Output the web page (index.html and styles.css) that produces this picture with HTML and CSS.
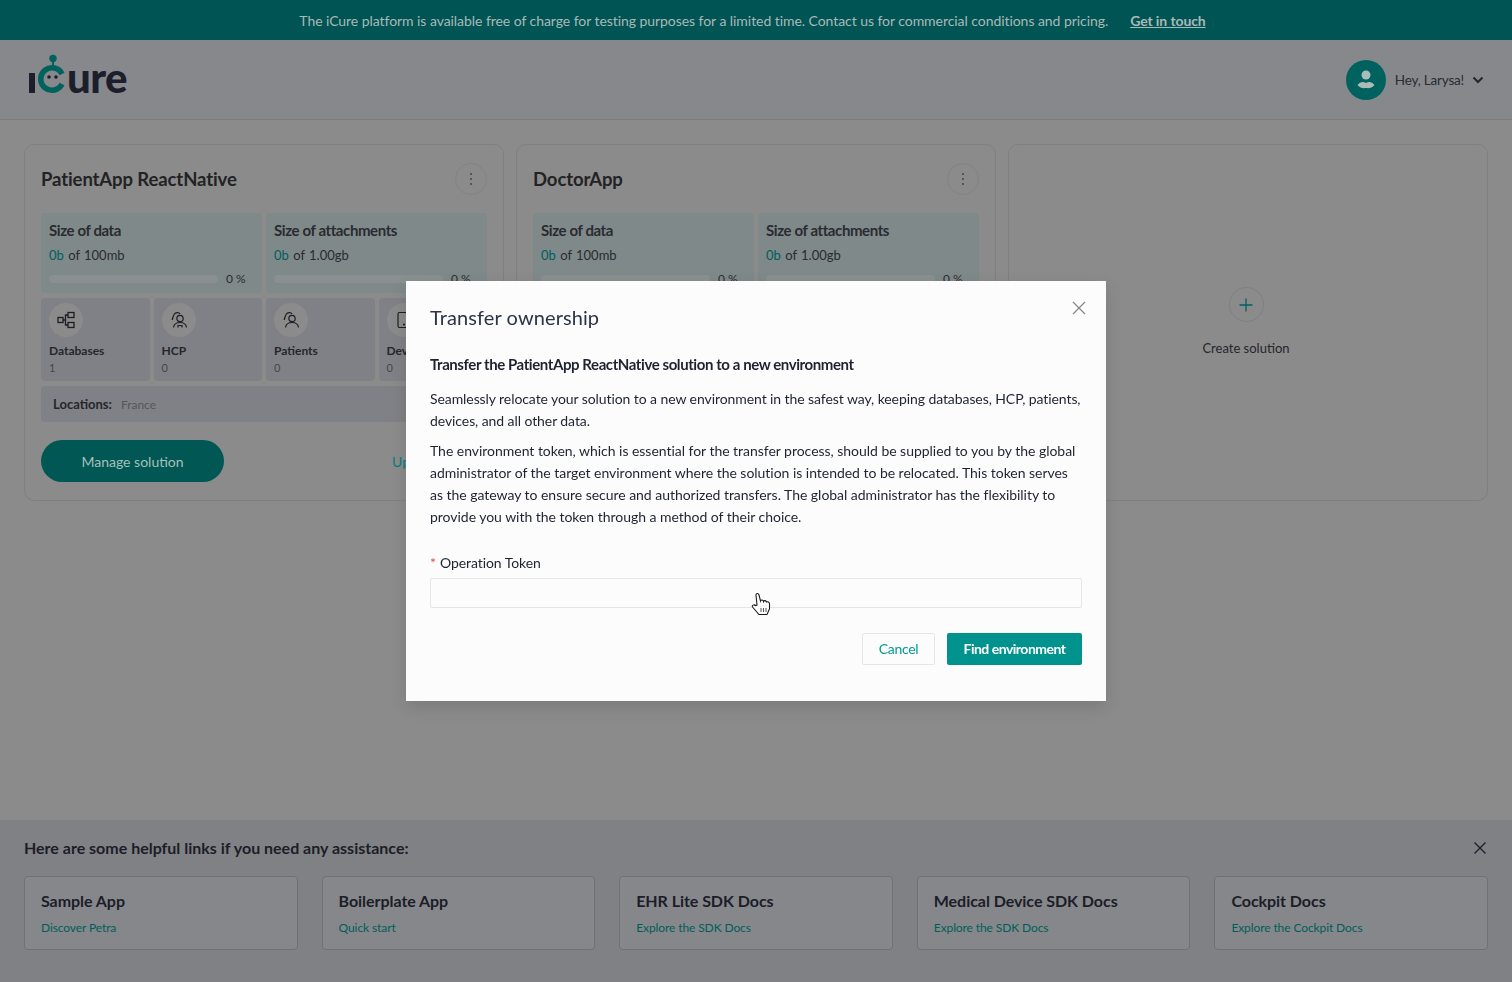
FILE: index.html
```html
<!DOCTYPE html>
<html lang="en">
<head>
    <meta charset="UTF-8">
    <meta name="viewport" content="width=device-width, initial-scale=1.0">
    <title>iCure Cockpit</title>
    <link rel="stylesheet" href="styles.css">
</head>
<body>
    <div class="banner">
        <span>The iCure platform is available free of charge for testing purposes for a limited time. Contact us for commercial conditions and pricing.</span>
        <a href="#" class="banner-link">Get in touch</a>
    </div>

    <header class="topbar">
        <div class="logo">
            <svg class="logo-mark" width="39" height="40" viewBox="0 0 39 40">
                <rect x="1" y="19" width="6" height="20" fill="#1d1e2b"/>
                <circle cx="25" cy="4.500" r="3.700" fill="#00625d"/>
                <rect x="24" y="7" width="2" height="5" fill="#00625d"/>
                <path d="M34 20 A11.200 11.200 0 1 0 34 30" fill="none" stroke="#00625d" stroke-width="5.600"/>
                <circle cx="21" cy="23" r="1.800" fill="#1d1e2b"/>
                <circle cx="28" cy="23" r="1.800" fill="#1d1e2b"/>
            </svg>
            <span class="logo-text">ure</span>
        </div>
        <div class="user">
            <span class="avatar">
                <svg width="40" height="40" viewBox="0 0 40 40">
                    <circle cx="20" cy="15" r="4.500" fill="#a9bcb9"/>
                    <path d="M11.500 25 C14 22 17 21 20 23 C23 21 26 22 28.500 25 C26 28 23 28.500 20 28 C17 28.500 14 28 11.500 25 Z" fill="#a9bcb9"/>
                </svg>
            </span>
            <span class="user-name">Hey, Larysa!</span>
            <svg width="12" height="8" viewBox="0 0 12 8"><path d="M1.500 1.500 L6 6 L10.500 1.500" fill="none" stroke="#25262c" stroke-width="2"/></svg>
        </div>
    </header>

    <main class="solutions">
        <section class="card">
            <div class="card-head">
                <h2>PatientApp ReactNative</h2>
                <button class="kebab"><i></i><i></i><i></i></button>
            </div>
            <div class="stats">
                <div class="stat">
                    <h3>Size of data</h3>
                    <p class="usage"><b>0b</b> of 100mb</p>
                    <div class="progress"><div class="track"></div><span>0 %</span></div>
                </div>
                <div class="stat">
                    <h3>Size of attachments</h3>
                    <p class="usage"><b>0b</b> of 1.00gb</p>
                    <div class="progress"><div class="track"></div><span>0 %</span></div>
                </div>
            </div>
            <div class="tiles">
                <div class="tile">
                    <span class="tile-icon">
                        <svg width="18" height="18" viewBox="0 0 18 18" fill="none" stroke="#1d1e24" stroke-width="1.300">
                            <rect x="1" y="6.500" width="5" height="5"/>
                            <rect x="11" y="1.500" width="6" height="5"/>
                            <rect x="11" y="11.500" width="6" height="5"/>
                            <path d="M6 9 H8.500 V4 H11 M8.500 9 V14 H11"/>
                        </svg>
                    </span>
                    <h4>Databases</h4>
                    <p>1</p>
                </div>
                <div class="tile">
                    <span class="tile-icon">
                        <svg width="18" height="18" viewBox="0 0 18 18" fill="none" stroke="#1d1e24" stroke-width="1.200">
                            <path d="M2 9 C3 7 3 5 4 3.500 C5.500 1 9 1 10 3"/>
                            <circle cx="10" cy="7.500" r="3.200"/>
                            <path d="M3.500 16.500 C4 13 6.500 11.500 10 11.500 C13.500 11.500 16 13 16.500 16.500"/>
                            <path d="M8 16.500 V14.500 H12 V16.500"/>
                        </svg>
                    </span>
                    <h4>HCP</h4>
                    <p>0</p>
                </div>
                <div class="tile">
                    <span class="tile-icon">
                        <svg width="18" height="18" viewBox="0 0 18 18" fill="none" stroke="#1d1e24" stroke-width="1.200">
                            <path d="M2 9 C3 7 3 5 4 3.500 C5.500 1 9 1 10 3"/>
                            <circle cx="10" cy="7.500" r="3.200"/>
                            <path d="M3.500 16.500 C4 13 6.500 11.500 10 11.500 C13.500 11.500 16 13 16.500 16.500"/>
                        </svg>
                    </span>
                    <h4>Patients</h4>
                    <p>0</p>
                </div>
                <div class="tile">
                    <span class="tile-icon">
                        <svg width="18" height="18" viewBox="0 0 18 18" fill="none" stroke="#1d1e24" stroke-width="1.200">
                            <rect x="3" y="1.500" width="12" height="15" rx="1.500"/>
                            <circle cx="9" cy="13.500" r=".5"/>
                        </svg>
                    </span>
                    <h4>Devices</h4>
                    <p>0</p>
                </div>
            </div>
            <div class="locations"><b>Locations:</b> <span>France</span></div>
            <div class="card-foot">
                <button class="manage">Manage solution</button>
                <a href="#" class="upgrade">Upgrade plan</a>
            </div>
        </section>

        <section class="card">
            <div class="card-head">
                <h2>DoctorApp</h2>
                <button class="kebab"><i></i><i></i><i></i></button>
            </div>
            <div class="stats">
                <div class="stat">
                    <h3>Size of data</h3>
                    <p class="usage"><b>0b</b> of 100mb</p>
                    <div class="progress"><div class="track"></div><span>0 %</span></div>
                </div>
                <div class="stat">
                    <h3>Size of attachments</h3>
                    <p class="usage"><b>0b</b> of 1.00gb</p>
                    <div class="progress"><div class="track"></div><span>0 %</span></div>
                </div>
            </div>
        </section>

        <section class="card card-create">
            <span class="plus">
                <svg width="16" height="16" viewBox="0 0 16 16"><path d="M8 1.500 V14.500 M1.500 8 H14.500" stroke="#00625d" stroke-width="1.300"/></svg>
            </span>
            <p>Create solution</p>
        </section>
    </main>

    <footer class="help">
        <div class="help-head">
            <h3>Here are some helpful links if you need any assistance:</h3>
            <svg width="14" height="14" viewBox="0 0 14 14"><path d="M1.500 1.500 L12.500 12.500 M12.500 1.500 L1.500 12.500" stroke="#1d1e2b" stroke-width="1.400"/></svg>
        </div>
        <div class="help-links">
            <a href="#" class="help-card"><strong>Sample App</strong><span>Discover Petra</span></a>
            <a href="#" class="help-card"><strong>Boilerplate App</strong><span>Quick start</span></a>
            <a href="#" class="help-card"><strong>EHR Lite SDK Docs</strong><span>Explore the SDK Docs</span></a>
            <a href="#" class="help-card"><strong>Medical Device SDK Docs</strong><span>Explore the SDK Docs</span></a>
            <a href="#" class="help-card"><strong>Cockpit Docs</strong><span>Explore the Cockpit Docs</span></a>
        </div>
    </footer>

    <div class="modal-wrap">
        <div class="modal">
            <svg class="modal-close" width="14" height="14" viewBox="0 0 14 14"><path d="M1 1 L13 13 M13 1 L1 13" stroke="#85868a" stroke-width="1.200"/></svg>
            <h2>Transfer ownership</h2>
            <h3>Transfer the PatientApp ReactNative solution to a new environment</h3>
            <p class="lead">Seamlessly relocate your solution to a new environment in the safest way, keeping databases, HCP, patients, devices, and all other data.</p>
            <p>The environment token, which is essential for the transfer process, should be supplied to you by the global administrator of the target environment where the solution is intended to be relocated. This token serves as the gateway to ensure secure and authorized transfers. The global administrator has the flexibility to provide you with the token through a method of their choice.</p>
            <label for="token"><em>*</em>Operation Token</label>
            <input type="text" id="token">
            <div class="modal-actions">
                <button class="btn-cancel">Cancel</button>
                <button class="btn-find">Find environment</button>
            </div>
        </div>
    </div>

    <!-- mouse pointer caught in the screenshot -->
    <svg class="cursor" width="20" height="24" viewBox="0 0 20 24">
        <path d="M6 13 L5 3 C5 1 7.500 1 8 3 L9.500 9 C10 7.500 12 7.500 12.500 9.500 C13 8 15 8.500 15.500 10 C16.500 9.500 18.500 10 18.500 12 L18.500 17 L16 22.500 L8 22.500 L1.500 15 C.5 13.500 3 12 4.500 13.500 Z" fill="#fff" stroke="#1b1b1b" stroke-width="1.100"/>
        <path d="M10 16 V20 M12.500 16 V20 M15 16 V20" stroke="#555" stroke-width="1"/>
    </svg>
</body>
</html>
```

FILE: styles.css
```css
/* General Styling */
* {
    box-sizing: border-box;
}

html, body {
    height: 100%;
}

body {
    font-family: 'Lato', sans-serif;
    margin: 0;
    padding: 0;
    background-color: #8b8b8b;
    color: #25262c;
    display: flex;
    flex-direction: column;
    overflow: hidden;
}

h2, h3, h4, p {
    margin: 0;
}

a {
    text-decoration: none;
}

button {
    font-family: inherit;
    cursor: pointer;
}

/* Banner */
.banner {
    height: 40px;
    background-color: #005453;
    color: #a9b9b8;
    font-size: 14px;
    letter-spacing: -0.057px;
    padding-right: 7px;
    display: flex;
    align-items: center;
    justify-content: center;
    gap: 22px;
    flex-shrink: 0;
}

.banner-link {
    color: #a9b9b8;
    font-weight: 700;
    letter-spacing: -0.1px;
    text-decoration: underline;
}

/* Header */
.topbar {
    height: 80px;
    background-color: #86888c;
    border-bottom: 1px solid #7b7c7f;
    padding: 0 28px;
    display: flex;
    align-items: center;
    justify-content: space-between;
    flex-shrink: 0;
}

.logo {
    display: flex;
    align-items: flex-end;
    height: 40px;
    margin-bottom: 12px;
}

.logo-mark {
    display: block;
}

.logo-text {
    font-size: 42px;
    font-weight: 900;
    line-height: 34px;
    color: #1d1e2b;
    letter-spacing: -0.5px;
}

.user {
    display: flex;
    align-items: center;
}

.avatar {
    width: 40px;
    height: 40px;
    border-radius: 50%;
    background-color: #00625e;
    display: block;
}

.avatar svg {
    display: block;
}

.user-name {
    font-size: 13.5px;
    letter-spacing: -0.2px;
    margin: 0 8px 0 9px;
    color: #2a2b33;
}

/* Solution cards */
.solutions {
    padding: 24px;
    display: grid;
    grid-template-columns: repeat(3, 1fr);
    gap: 12px;
    flex-shrink: 0;
}

.card {
    height: 357px;
    border: 1px solid #7e8083;
    border-radius: 10px;
    padding: 18px 16px 16px;
    overflow: hidden;
}

.card-head {
    display: flex;
    align-items: center;
    justify-content: space-between;
    height: 32px;
    margin-bottom: 18px;
}

.card-head h2 {
    font-size: 18.5px;
    font-weight: 700;
    letter-spacing: -0.1px;
    color: #232325;
}

.kebab {
    width: 32px;
    height: 32px;
    border: 1px solid #838383;
    border-radius: 50%;
    background: none;
    padding: 0;
    display: flex;
    flex-direction: column;
    align-items: center;
    justify-content: center;
    gap: 3px;
}

.kebab i {
    width: 2px;
    height: 2px;
    background-color: #55565a;
    display: block;
}

.stats {
    display: grid;
    grid-template-columns: 1fr 1fr;
    gap: 4px;
}

.stat {
    height: 80px;
    background-color: #7f898a;
    border-radius: 4px;
    padding: 8px 8px 0;
}

.stat h3 {
    font-size: 15px;
    font-weight: 700;
    letter-spacing: -0.4px;
    color: #2a2b30;
    line-height: 18px;
}

.usage {
    font-size: 13px;
    margin-top: 7px;
    line-height: 18px;
    color: #2a2b30;
    word-spacing: 1px;
}

.usage b {
    font-weight: 400;
    color: #005e5a;
}

.progress {
    display: flex;
    align-items: center;
    gap: 8px;
    margin-top: 7px;
    font-size: 12px;
    color: #2a2b30;
}

.track {
    flex: 1;
    height: 8px;
    border-radius: 4px;
    background-color: #8a8f90;
}

.progress span {
    width: 28px;
    white-space: nowrap;
}

.tiles {
    display: grid;
    grid-template-columns: repeat(4, 1fr);
    gap: 4px;
    margin-top: 5px;
}

.tile {
    height: 83px;
    background-color: #808186;
    border-radius: 4px;
    padding: 5px 8px;
}

.tile-icon {
    width: 34px;
    height: 34px;
    border-radius: 50%;
    background-color: #8b8b8b;
    display: flex;
    align-items: center;
    justify-content: center;
}

.tile h4 {
    font-size: 12px;
    font-weight: 700;
    line-height: 16px;
    margin-top: 6px;
    color: #25262c;
}

.tile p {
    font-size: 11px;
    line-height: 14px;
    margin-top: 2px;
    color: #45464c;
}

.locations {
    height: 36px;
    background-color: #808186;
    border-radius: 4px;
    margin-top: 5px;
    padding: 0 12px;
    display: flex;
    align-items: center;
    gap: 9px;
    font-size: 13px;
}

.locations b {
    color: #25262c;
}

.locations span {
    font-size: 12px;
    color: #55565c;
}

.card-foot {
    display: flex;
    align-items: center;
    justify-content: space-between;
    margin-top: 18px;
}

.manage {
    width: 183px;
    height: 42px;
    border: none;
    border-radius: 21px;
    background-color: #005753;
    color: #a5c0bc;
    font-size: 14px;
}

.upgrade {
    color: #00807c;
    font-size: 14px;
    margin-right: 13px;
}

.card-create {
    display: flex;
    flex-direction: column;
    align-items: center;
    padding: 142px 20px 16px 16px;
}

.plus {
    width: 35px;
    height: 35px;
    border: 1px solid #7e8083;
    border-radius: 50%;
    display: flex;
    align-items: center;
    justify-content: center;
}

.card-create p {
    font-size: 13px;
    line-height: 18px;
    margin-top: 17px;
    color: #25262c;
}

/* Helpful links */
.help {
    margin-top: auto;
    height: 162px;
    background-color: #808185;
    padding: 17px 24px 0;
    flex-shrink: 0;
}

.help-head {
    display: flex;
    align-items: center;
    justify-content: space-between;
    padding-right: 1px;
    height: 22px;
}

.help-head h3 {
    font-size: 16px;
    font-weight: 700;
    margin-bottom: 2px;
    color: #1c1d28;
}

.help-links {
    display: grid;
    grid-template-columns: repeat(5, 1fr);
    gap: 24px;
    margin-top: 17px;
}

.help-card {
    height: 74px;
    background-color: #86878b;
    border: 1px solid #6f7075;
    border-radius: 4px;
    padding: 13px 16px;
    display: flex;
    flex-direction: column;
}

.help-card strong {
    font-size: 16px;
    font-weight: 700;
    letter-spacing: -0.05px;
    line-height: 22px;
    color: #1c1d28;
}

.help-card span {
    font-size: 12px;
    letter-spacing: -0.1px;
    line-height: 16px;
    margin-top: 8px;
    color: #005e5a;
}

/* Modal */
.modal-wrap {
    position: fixed;
    inset: 0;
    display: flex;
    align-items: center;
    justify-content: center;
}

.modal {
    position: relative;
    width: 700px;
    height: 420px;
    background-color: #fcfcfd;
    padding: 24px;
    box-shadow: 0 6px 16px rgba(0, 0, 0, 0.12);
}

.modal-close {
    position: absolute;
    top: 20px;
    right: 20px;
}

.modal h2 {
    font-size: 20px;
    font-weight: 400;
    letter-spacing: 0.1px;
    line-height: 24px;
    color: #2e3347;
}

.modal h3 {
    font-size: 15px;
    font-weight: 700;
    letter-spacing: -0.42px;
    line-height: 22px;
    margin-top: 24px;
    margin-bottom: 13px;
    color: #1f2330;
}

.modal p {
    font-size: 14px;
    letter-spacing: -0.03px;
    line-height: 22px;
    margin-bottom: 8px;
    color: #1f2330;
}

.modal p.lead {
    letter-spacing: -0.08px;
}

.modal label {
    display: block;
    font-size: 14px;
    letter-spacing: -0.07px;
    line-height: 20px;
    margin-top: 25px;
    color: #1f2330;
}

.modal label em {
    color: #e5484d;
    font-style: normal;
    margin-right: 4px;
}

.modal input {
    display: block;
    width: 100%;
    height: 30px;
    margin-top: 5px;
    border: 1px solid #e2e7ec;
    border-radius: 2px;
    background: none;
}

.modal-actions {
    display: flex;
    justify-content: flex-end;
    gap: 12px;
    margin-top: 25px;
}

.modal-actions button {
    height: 32px;
    border-radius: 2px;
    font-size: 14px;
    padding: 0 0 2px;
}

.btn-cancel {
    width: 73px;
    background: none;
    border: 1px solid #e2e7ec;
    color: #009a94;
    letter-spacing: -0.3px;
}

.btn-find {
    width: 135px;
    background-color: #00938e;
    border: none;
    color: #fff;
    font-weight: 700;
    letter-spacing: -0.5px;
}

.cursor {
    position: fixed;
    left: 751px;
    top: 592px;
}
```
